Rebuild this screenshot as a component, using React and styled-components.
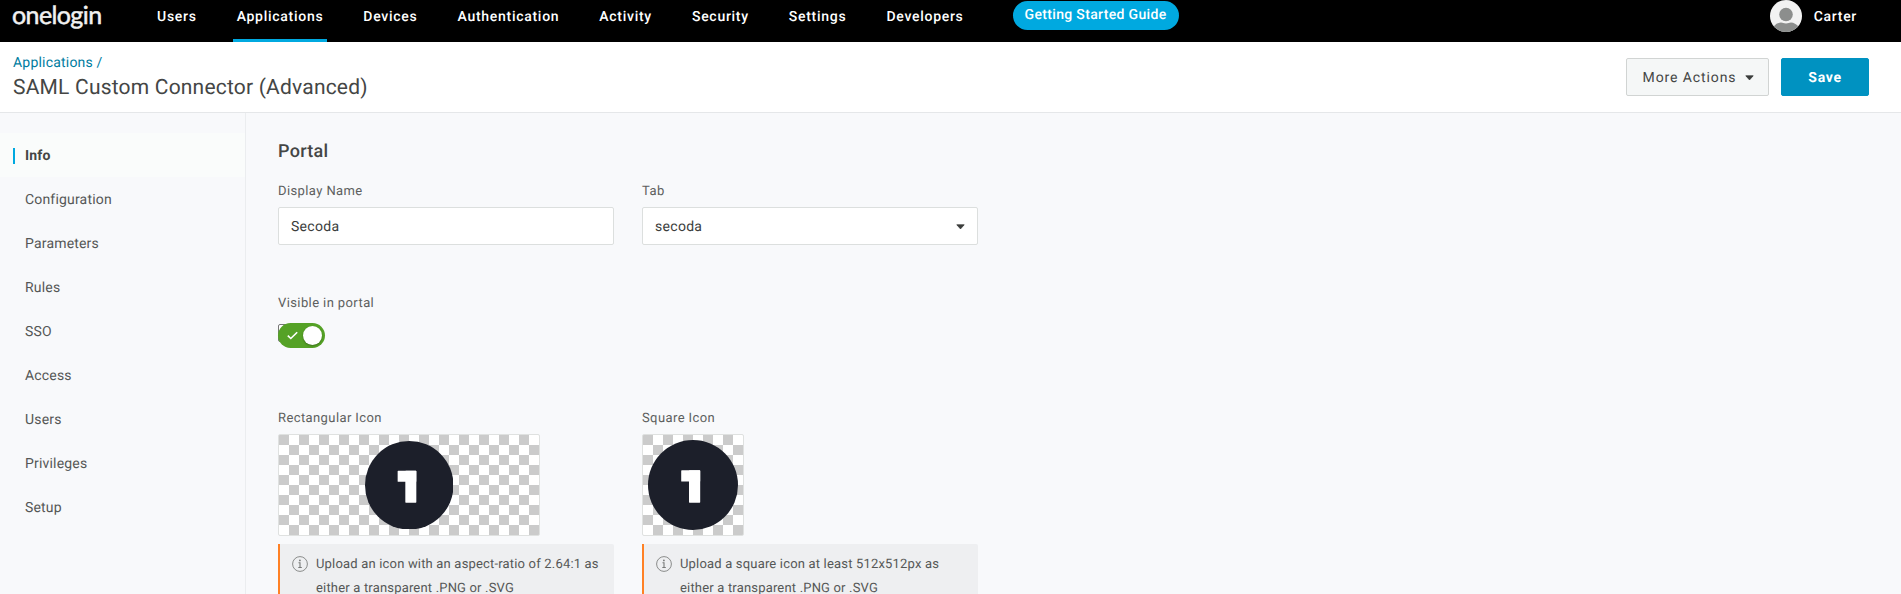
import React from "react";
import styled, { createGlobalStyle, css } from "styled-components";

const Global = createGlobalStyle`
  *, *::before, *::after { box-sizing: border-box; }
  html, body { margin: 0; padding: 0; overflow: hidden; }
  body {
    font-family: Roboto, "Liberation Sans", sans-serif;
    background: #f8f9fb;
    color: #444645;
    -webkit-font-smoothing: antialiased;
    text-rendering: geometricPrecision;
  }
  button { text-rendering: inherit; }
`;

const Page = styled.div`
  height: 594px;
  display: flex;
  flex-direction: column;
  overflow: hidden;
`;

const TopBar = styled.header`
  flex: none;
  display: flex;
  height: 42px;
  background: #000;
  color: #fff;
`;

const Wordmark = styled.div`
  width: 141px;
  padding-left: 12px;
  font: 400 25px/31px Lato, sans-serif;
  letter-spacing: -0.6px;
  color: #f1f1f1;
  -webkit-text-stroke: 0.5px #f1f1f1;
`;

const Nav = styled.nav`
  display: flex;
  gap: 32px;
  padding-left: 12px;
`;

const NavItem = styled.a`
  height: 42px;
  padding: 0 4px;
  font-size: 14px;
  font-weight: 500;
  line-height: 34px;
  letter-spacing: 0.72px;
  border-bottom: 3px solid ${(p) => (p.$active ? "#00a9e0" : "transparent")};
`;

const GuideButton = styled.button`
  width: 166px;
  height: 29px;
  margin: 1px 0 0 45px;
  padding: 0;
  border: 0;
  border-radius: 15px;
  background: #00a9e0;
  color: #fff;
  font: 500 14px/29px Roboto, sans-serif;
  letter-spacing: 0.34px;
`;

const Account = styled.div`
  display: flex;
  align-items: flex-start;
  gap: 12px;
  margin-left: auto;
  padding-right: 44px;
  font-size: 14px;
  font-weight: 500;
  line-height: 34px;
  letter-spacing: 0.7px;

  svg { display: block; }
`;

const TitleBar = styled.section`
  flex: none;
  display: flex;
  justify-content: space-between;
  height: 71px;
  padding: 0 32px 0 13px;
  background: #fff;
  border-bottom: 1px solid #e5e7e9;
`;

const Titles = styled.div`
  padding-top: 11px;
`;

const Crumb = styled.div`
  font-size: 14px;
  line-height: 20px;
  letter-spacing: 0.2px;
  color: #007c9f;
`;

const Title = styled.h1`
  margin: 1px 0 0;
  font-size: 21px;
  font-weight: 400;
  line-height: 28px;
  letter-spacing: 0.2px;
`;

const Actions = styled.div`
  display: flex;
  gap: 12px;
  padding-top: 16px;
`;

const Button = styled.button`
  display: flex;
  align-items: center;
  justify-content: center;
  gap: 9px;
  height: 38px;
  width: ${(p) => p.$width}px;
  padding: 1px 0 0 2px;
  border: 1px solid #d1d4d3;
  border-radius: 2px;
  background: #f5f7f7;
  color: #444645;
  font: 400 14px Roboto, sans-serif;
  letter-spacing: 0.9px;

  ${(p) =>
    p.$primary &&
    css`
      padding-left: 0;
      border-color: #0092c1;
      background: #0092c1;
      color: #fff;
      font-weight: 700;
      letter-spacing: 0.7px;
    `}
`;

const Body = styled.div`
  flex: 1;
  display: flex;
  min-height: 0;
`;

const Sidebar = styled.aside`
  flex: none;
  width: 246px;
  padding-top: 20px;
  border-right: 1px solid #ebedef;
`;

const SideItem = styled.a`
  display: flex;
  align-items: center;
  height: 44px;
  padding: 1px 0 0 13px;
  font-size: 14px;
  letter-spacing: 0.18px;
  color: #555756;

  &::before {
    content: "";
    width: 2px;
    height: 16px;
    margin-right: 10px;
    background: ${(p) => (p.$active ? "#00a9e0" : "transparent")};
  }

  ${(p) =>
    p.$active &&
    css`
      background: #fafcfb;
      color: #444645;
      font-weight: 700;
    `}
`;

const Content = styled.main`
  padding: 27px 0 0 32px;
`;

const Heading = styled.h2`
  margin: 0 0 18px;
  font-size: 18px;
  font-weight: 500;
  line-height: 24px;
  letter-spacing: 0.3px;
`;

const FieldRow = styled.div`
  display: flex;
  gap: 28px;
  height: ${(p) => p.$height}px;
`;

const Field = styled.div`
  width: 336px;
`;

const Label = styled.div`
  margin-bottom: ${(p) => p.$gap || 5}px;
  font-size: 13px;
  line-height: 20px;
  letter-spacing: 0.4px;
  color: #5d5f5e;
`;

const Input = styled.div`
  display: flex;
  align-items: center;
  justify-content: space-between;
  height: 38px;
  padding: 1px 12px 0;
  border: 1px solid #dcdfde;
  border-radius: 2px;
  background: #fff;
  color: #3b3d3c;
  font-size: 14px;
  letter-spacing: 0.3px;
`;

const ToggleBase = styled.div`
  position: relative;
  width: 47px;
  height: 25px;
`;

const NativeBox = styled.div`
  position: absolute;
  left: 0;
  top: 1px;
  width: 18px;
  height: 18px;
  border: 1px solid #767676;
  border-radius: 2px;
  background: #fff;
`;

const Track = styled.div`
  position: relative;
  display: flex;
  align-items: center;
  justify-content: space-between;
  height: 25px;
  padding: 0 3px 0 9px;
  border-radius: 13px;
  background: #55a226;
`;

const Knob = styled.span`
  width: 19px;
  height: 19px;
  border-radius: 50%;
  background: #fff;
  box-shadow: 0 1px 2px rgba(0, 0, 0, 0.3);
`;

const Preview = styled.div`
  display: flex;
  align-items: center;
  justify-content: center;
  width: ${(p) => p.$width}px;
  height: 102px;
  margin-bottom: 8px;
  border: 1px solid #dfe1e0;
  border-radius: 2px;
  background: repeating-conic-gradient(#fff 0 25%, #cbcbcb 0 50%) 0 0 / 20px 20px;
`;

const Notice = styled.div`
  display: flex;
  height: 80px;
  padding: 8px 12px;
  border-left: 2px solid #ff8125;
  border-radius: 0 2px 2px 0;
  background: #eeeff1;
  color: #555756;
  font-size: 13px;
  line-height: 24px;
  letter-spacing: 0.18px;

  svg { flex: none; margin: 4px 8px 0 0; }
`;

const NoticeText = styled.p`
  margin: 0;
  padding-top: 1px;
`;

const Caret = () => (
  <svg width="9" height="6" viewBox="0 0 9 6">
    <path d="M.8.8h7.400L4.500 4.900z" fill="#3b3d3c" stroke="#3b3d3c" strokeWidth=".8" strokeLinejoin="round" />
  </svg>
);

const Avatar = () => (
  <svg width="32" height="32" viewBox="0 0 32 32">
    <defs>
      <clipPath id="avatar"><circle cx="16" cy="16" r="16" /></clipPath>
    </defs>
    <g clipPath="url(#avatar)">
      <rect width="32" height="32" fill="#f2f2f2" />
      <circle cx="16" cy="14.5" r="6.8" fill="#8c8e8d" />
      <path d="M3 32v-5q4-4.5 8-4.5c2 0 2.500 1 5 1s3-1 5-1q4 0 8 4.500v5z" fill="#8c8e8d" />
    </g>
  </svg>
);

const AppMark = ({ size }) => (
  <svg width={size} height={size} viewBox="0 0 90 90">
    <circle cx="45" cy="45" r="45" fill="#1c1f2a" />
    <rect x="33.200" y="30.300" width="19" height="11.200" rx=".6" fill="#fff" />
    <rect x="41" y="30.300" width="11.200" height="32.400" rx=".6" fill="#fff" />
  </svg>
);

const InfoIcon = () => (
  <svg width="16" height="16" viewBox="0 0 16 16">
    <circle cx="8" cy="8" r="7.400" fill="none" stroke="#8a8c8b" />
    <path d="M6.500 6.800H8v4.700M6.300 11.500h3.500" fill="none" stroke="#777978" strokeWidth="1.100" />
    <circle cx="7.900" cy="4.400" r=".9" fill="#777978" />
  </svg>
);

const NAV = ["Users", "Applications", "Devices", "Authentication", "Activity", "Security", "Settings", "Developers"];
const SIDE = ["Info", "Configuration", "Parameters", "Rules", "SSO", "Access", "Users", "Privileges", "Setup"];

export default function App() {
  return (
    <Page>
      <Global />
      <TopBar>
        <Wordmark>onelogin</Wordmark>
        <Nav>
          {NAV.map((n) => <NavItem key={n} $active={n === "Applications"}>{n}</NavItem>)}
        </Nav>
        <GuideButton>Getting Started Guide</GuideButton>
        <Account><Avatar />Carter</Account>
      </TopBar>
      <TitleBar>
        <Titles>
          <Crumb>Applications /</Crumb>
          <Title>SAML Custom Connector (Advanced)</Title>
        </Titles>
        <Actions>
          <Button $width={143}>More Actions<Caret /></Button>
          <Button $width={88} $primary>Save</Button>
        </Actions>
      </TitleBar>
      <Body>
        <Sidebar>
          {SIDE.map((s) => <SideItem key={s} $active={s === "Info"}>{s}</SideItem>)}
        </Sidebar>
        <Content>
          <Heading>Portal</Heading>
          <FieldRow $height={112}>
            <Field>
              <Label>Display Name</Label>
              <Input>Secoda</Input>
            </Field>
            <Field>
              <Label>Tab</Label>
              <Input>secoda<Caret /></Input>
            </Field>
          </FieldRow>
          <FieldRow $height={115}>
            <Field>
              <Label $gap={9}>Visible in portal</Label>
              <ToggleBase>
                <NativeBox />
                <Track>
                  <svg width="11" height="9" viewBox="0 0 11 9">
                    <path d="M.8 4.600 3.800 7.500 10.200 1.200" fill="none" stroke="#fff" strokeWidth="1.600" />
                  </svg>
                  <Knob />
                </Track>
              </ToggleBase>
            </Field>
          </FieldRow>
          <FieldRow $height={200}>
            <Field>
              <Label>Rectangular Icon</Label>
              <Preview $width={262}><AppMark size={88.5} /></Preview>
              <Notice><InfoIcon /><NoticeText>Upload an icon with an aspect-ratio of 2.64:1 as either a transparent .PNG or .SVG</NoticeText></Notice>
            </Field>
            <Field>
              <Label>Square Icon</Label>
              <Preview $width={102}><AppMark size={90} /></Preview>
              <Notice><InfoIcon /><NoticeText>Upload a square icon at least 512x512px as either a transparent .PNG or .SVG</NoticeText></Notice>
            </Field>
          </FieldRow>
        </Content>
      </Body>
    </Page>
  );
}
